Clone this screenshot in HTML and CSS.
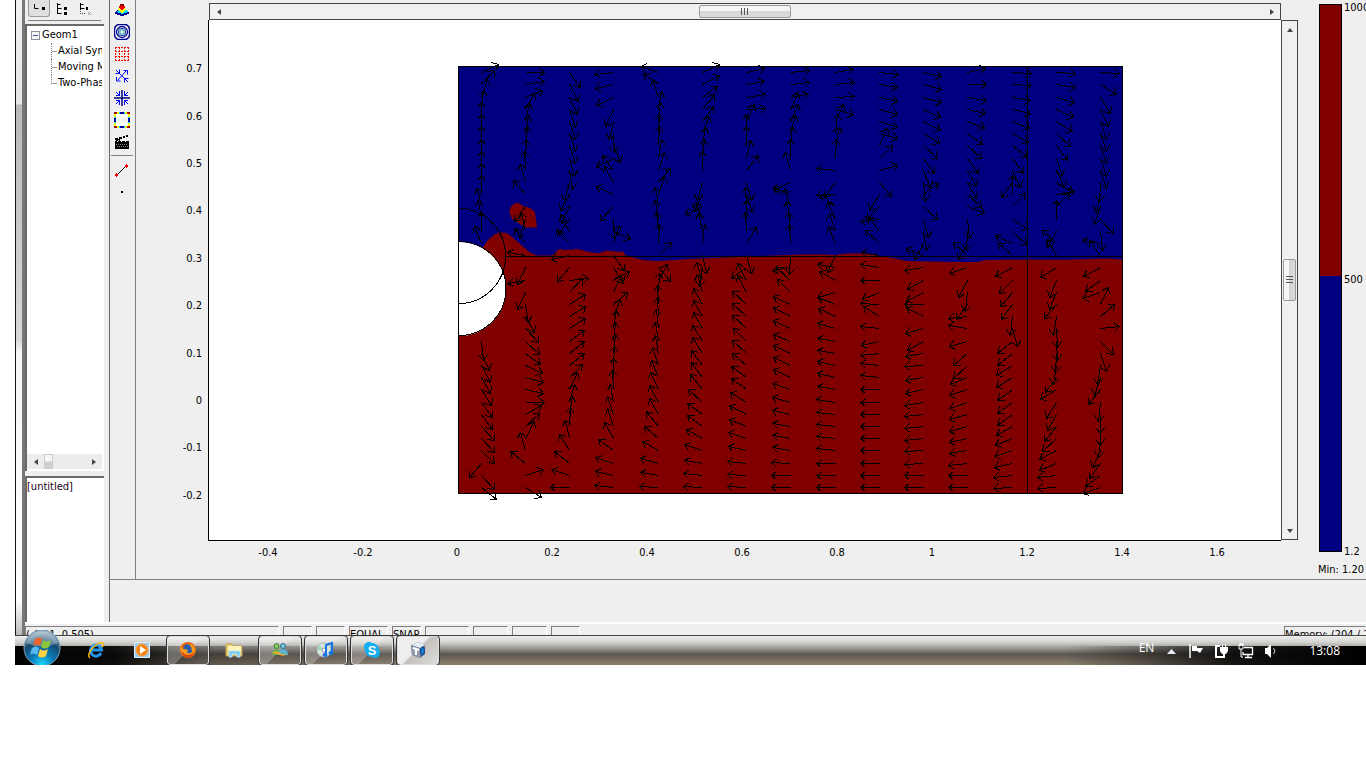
FILE: index.html
```html
<!DOCTYPE html>
<html lang="en">
<head>
  <meta charset="UTF-8" />
  <meta name="viewport" content="width=device-width, initial-scale=1.0" />
  <title>Geom1 - [untitled]</title>
  <link rel="stylesheet" href="styles.css">
</head>
<body>
  <div class="desktop">
    <div class="app">
      <div class="frame"></div>
      <div class="window">
        <div class="upper">
          <aside class="sidebar">
            <div class="view-buttons">
              <button class="view-btn pressed" aria-label="Compact"><svg width="14" height="14"><path d="M2.500 3v4.500h4" fill="none" stroke="#000"/><rect x="10" y="6" width="3" height="3"/></svg></button>
              <button class="view-btn" aria-label="Expanded"><svg width="14" height="14"><path d="M2.500 1v11M2.500 6.500h4M2.500 11.500h4M2.500 2.500h3" fill="none" stroke="#000"/><rect x="9" y="5" width="3" height="3"/><rect x="9" y="10" width="3" height="3"/></svg></button>
              <button class="view-btn" aria-label="Detailed"><svg width="14" height="14"><path d="M2.500 1v7M2.500 2.500h3M2.500 6.500h4" fill="none" stroke="#000"/><path d="M2.500 9v3M4 11.500h4" stroke="#555" stroke-dasharray="1 1"/><rect x="8" y="5" width="2" height="3"/><path d="M10 10l3 3M13 10l-3 3" stroke="#999"/></svg></button>
            </div>
            <div class="tree">
              <ul class="tree-list">
                <li class="root"><span class="expander"></span>Geom1</li>
                <li class="leaf">Axial Symmetry</li>
                <li class="leaf">Moving Mesh</li>
                <li class="leaf last">Two-Phase Flow</li>
              </ul>
              <div class="tree-scroll">
                <button class="arrow left" aria-label="Scroll left"></button>
                <span class="tree-thumb"></span>
                <button class="arrow right" aria-label="Scroll right"></button>
              </div>
            </div>
            <div class="details">[untitled]</div>
          </aside>

          <main class="main">
            <div class="work">
              <nav class="toolbar">
                <button class="tool" aria-label="Surface plot"><svg width="16" height="16" shape-rendering="crispEdges"><path d="M0 11l4-3h8l4 3-4 2-4 1-4-1z" fill="#000090"/><path d="M2 10l3-3h6l3 3-6 2z" fill="#00d8ff"/><path d="M4 8l2-3h4l2 3-4 3z" fill="#ff0"/><path d="M5 6V4h1V2h4v2h1v2l-3 2z" fill="#f40000"/><rect x="6" y="2" width="4" height="2" fill="#900000"/></svg></button>
                <button class="tool" aria-label="Contour plot"><svg width="16" height="16"><rect x=".5" y=".5" width="15" height="15" rx="5" fill="#fff" stroke="#000090" stroke-width="1.500"/><circle cx="8" cy="8" r="5.500" fill="none" stroke="#000090" stroke-width="1.300"/><rect x="4.500" y="4.500" width="7" height="7" rx="2" fill="#fff" stroke="#2030a0"/><rect x="6" y="6" width="4" height="4" fill="#fff" stroke="#189090"/></svg></button>
                <button class="tool" aria-label="Arrow plot"><svg width="16" height="16"><g fill="none" stroke="#f00" stroke-dasharray="2 1"><path d="M1 1.500h14M1 5.500h14M1 10.500h14M1 14.500h14M1.500 1v14M5.500 1v14M10.500 1v14M14.500 1v14"/></g><path d="M7 7h2v2H7z" fill="#efefef"/></svg></button>
                <button class="tool" aria-label="Principal plot"><svg width="16" height="16" fill="none" stroke="#00f"><path d="M4 4l8 8M12 3l-8 9M1.500 5.500h4v-4M2 2l3 3M9.500 2.500h4v4M2.500 9v4h4M10.500 14.500v-4h4M14 14l-3-3"/></svg></button>
                <button class="tool" aria-label="Streamline plot"><svg width="16" height="16" fill="none" stroke="#00f"><path d="M2 2l4 4M14 2l-4 4M2 14l4-4M14 14l-4-4M2 5.500h3.500V1M14 5.500h-3.500V1M2 10.500h3.500V15M14 10.500h-3.500V15"/><path d="M8 0v16M0 8h16" stroke="#000080" stroke-width="1.500"/></svg></button>
                <button class="tool" aria-label="Boundary plot"><svg width="16" height="16" shape-rendering="crispEdges"><path d="M1 1h14v14H1z" fill="#fff" stroke="#0000a0" stroke-width="2"/><g fill="#ff0"><path d="M2 0h3v2H2zM11 0h3v2h-3zM2 14h3v2H2zM11 14h3v2h-3zM0 2h2v3H0zM0 11h2v3H0zM14 2h2v3h-2zM14 11h2v3h-2z"/></g><g fill="#00d8ff"><path d="M5 0h1v2H5zM10 0h1v2h-1zM5 14h1v2H5zM10 14h1v2h-1zM0 5h2v1H0zM0 10h2v1H0zM14 5h2v1h-2zM14 10h2v1h-2z"/></g><g fill="#a00000"><path d="M0 0h3v2H0zM13 0h3v2h-3zM0 14h3v2H0zM13 14h3v2h-3z"/></g></svg></button>
                <button class="tool" aria-label="Animate"><svg width="16" height="16" shape-rendering="crispEdges"><path d="M1 7h14v8H1zM1 4h3v2H1zM5 3h3v2H5zM9 2h2v2H9zM12 1h2v2h-2zM2 5h4v2H2z"/><path d="M3 8l2-2M7 8l2-2M11 8l2-2" stroke="#efefef"/><path d="M2 10.500h12M3 12.500h12" stroke="#888" stroke-dasharray="1 1"/></svg></button>
                <hr class="tool-sep">
                <button class="tool" aria-label="Line"><svg width="16" height="16"><path d="M2.500 13.500l10-10" stroke="#000"/><path d="M1 12h3v2H1zM2 11h1v4H2zM11 3h3v2h-3zM12 2h1v4h-1z" fill="#e00"/></svg></button>
                <button class="tool" aria-label="Point"><svg width="16" height="16"><path d="M7 7h2v2H7z"/></svg></button>
              </nav>

              <section class="canvas">
                <div class="h-scroll">
                  <button class="arrow left" aria-label="Scroll left"></button>
                  <span class="thumb h-thumb"></span>
                  <button class="arrow right" aria-label="Scroll right"></button>
                </div>
                <svg class="plot" viewBox="136 20 1145 558" role="img" aria-label="Phase plot with velocity arrows">
                  <rect x="209" y="20" width="1072" height="520" fill="#fff"/>
                  <path d="M208.500 20v520.500H1281" class="line"/>
                  <rect x="459" y="67" width="663" height="426" fill="#000080"/>
                  <path fill="#800000" d="M459 493V290L483 247L488 240L495 234L500 232.500L507 233L518 242L530 252.500L537 255.500H552L559 249L565 250L578 249L587 251.500L598 253.500L607 250.500L620 252L623 251L625 255L635 258L643 260L657 261L690 259L713 258L760 256L800 254.500H825L835 255L847 253.500L863 253.500L880 256L893 258L907 261L955 262H977L985 260L1027 259.500L1063 259.700L1107 258.500L1122 259.500V493Z"/>
                  <path fill="#800000" d="M509 211L512 205L518 202.500L523 206L530 208L535 212L537 227.500H525L520 224L512 219Z"/>
                  <path d="M459 242a47 47 0 0 1 0 94z" fill="#fff"/>
                  <path d="M459 241.500a47 47 0 0 1 0 94M459 208.500a46.500 47.500 0 0 1 0 95" class="line"/>
                  <path d="M506 256.500H1122M1027.500 67V493M458.500 66.500H1122.500V493.500H458.500Z" class="line"/>
                  <g id="arrows" class="line"></g>
                  <g id="ticks" class="ticks"></g>
                </svg>
                <div class="v-scroll">
                  <button class="arrow up" aria-label="Scroll up"></button>
                  <span class="thumb v-thumb"></span>
                  <button class="arrow down" aria-label="Scroll down"></button>
                </div>
                <div class="legend">
                  <div class="scale">
                    <div class="color-bar"></div>
                    <div class="scale-labels"><span>1000</span><span>500</span><span>1.2</span></div>
                  </div>
                  <div class="min">Min: 1.20</div>
                </div>
              </section>
            </div>
            <div class="log"></div>
          </main>
        </div>
        <div class="status">
          <span class="cell coords">(-0.21, 0.505)</span>
          <span class="cell small"></span>
          <span class="cell small"></span>
          <span class="cell equal">EQUAL</span>
          <span class="cell small">SNAP</span>
          <span class="cell wide"></span>
          <span class="cell medium"></span>
          <span class="cell medium"></span>
          <span class="cell small"></span>
          <span class="cell memory">Memory: (204 / 215)</span>
        </div>
      </div>
    </div>

    <footer class="taskbar">
      <button class="start" aria-label="Start">
        <svg width="38" height="36" viewBox="0 0 38 36">
          <defs>
            <radialGradient id="orb" cx=".5" cy=".95" r=".9"><stop offset="0" stop-color="#18d8ff"/><stop offset=".35" stop-color="#0b7cb8"/><stop offset=".7" stop-color="#164a70"/><stop offset="1" stop-color="#9ab4c4"/></radialGradient>
          </defs>
          <circle cx="19" cy="18" r="18" fill="url(#orb)" stroke="#7fa3b8"/>
          <path d="M3 13a17 17 0 0 1 32 0q-16 7-32 0z" fill="#fff" opacity=".3"/>
          <path d="M12 9q4-3 7 0l-2 7q-4-3-7 0z" fill="#f0642a"/>
          <path d="M20 10q4 3 8 0l-2 7q-4 3-8 0z" fill="#8cc63c"/>
          <path d="M9 18q4-3 7 0l-2 7q-4-3-7 0z" fill="#5ab8f0"/>
          <path d="M17 19q4 3 8 0l-2 7q-4 3-8 0z" fill="#ffd042"/>
        </svg>
      </button>
      <button class="task" aria-label="Internet Explorer"><svg width="18" height="18"><path d="M14 12a5.500 5.500 0 1 1 .500-3H5" fill="none" stroke="#2496ee" stroke-width="3"/><path d="M3 17C-2 13 10 0 16 2c1 1 0 3-1 4" fill="none" stroke="#f4b818" stroke-width="1.500"/></svg></button>
      <button class="task" aria-label="Media Player"><svg width="18" height="18"><path d="M1.500 1.500h15v15h-15z" fill="#9ccdf0" stroke="#dceefa"/><circle cx="9" cy="9" r="6" fill="#f58410" stroke="#f9a040"/><path d="M7 5v8l6-4z" fill="#fff"/></svg></button>
      <button class="task open" aria-label="Firefox"><svg width="18" height="18"><circle cx="9" cy="9" r="8" fill="#e8680c"/><circle cx="9" cy="8" r="5" fill="#2a5cab"/><path d="M1 5q3 4 5 3l3 1-1 3q3 1 5-1Q13 5 9 3q6-1 7 6-1 7-7 7T1 9z" fill="#f79a1c"/><path d="M2 9q3 5 7 5t6-4q-1 7-6 7T2 9z" fill="#d8480c"/></svg></button>
      <button class="task" aria-label="Explorer"><svg width="18" height="18"><path d="M1 3h6l1 2h9v10H1z" fill="#e8cf70" stroke="#bfa14c"/><path d="M3 5h13v5H3z" fill="#fff5b8"/><path d="M4 16v-6h11v6h-3v-3H7v3z" fill="#7ccaf0" stroke="#b8e6fa"/></svg></button>
      <button class="task open" aria-label="Messenger"><svg width="18" height="18"><circle cx="5.500" cy="5" r="2.500" fill="#8cc868" stroke="#3f7f30"/><path d="M1 14q0-6 5-6t5 6z" fill="#6fae50"/><circle cx="12" cy="5" r="2.500" fill="#80c8e0" stroke="#286f90"/><path d="M7 14q0-6 5-6t5 6z" fill="#5cb0d0"/><path d="M1 12q4-3 8 0t8 1q-4 3-8 1t-8-2z" fill="#f7a823"/></svg></button>
      <button class="task open" aria-label="iTunes"><svg width="18" height="18"><circle cx="7" cy="9" r="7" fill="#d5e6de" stroke="#b8b8c8"/><path d="M7 9L2 4l-2 5z" fill="#9ad8b8"/><path d="M7 9l3 6-5 1z" fill="#e7b8e0"/><circle cx="7" cy="9" r="2" fill="#fff" stroke="#999"/><path d="M9 13V4l6-2v9" fill="none" stroke="#1574e0" stroke-width="2"/><ellipse cx="8" cy="14" rx="2.500" ry="2" fill="#1574e0"/><ellipse cx="14" cy="12" rx="2.500" ry="2" fill="#1574e0"/></svg></button>
      <button class="task open" aria-label="Skype"><svg width="18" height="18"><circle cx="6" cy="6" r="5" fill="#10aef0"/><circle cx="12" cy="12" r="5" fill="#10aef0"/><circle cx="9" cy="9" r="7" fill="#10aef0"/><text x="9" y="14" class="skype">S</text></svg></button>
      <button class="task open active" aria-label="Multiphysics"><svg width="18" height="18"><path d="M2 4l8-3 6 3v9l-5 4-8-3z" fill="#63708c"/><path d="M2 4l8-3 6 3-5 3z" fill="#e6ecf6"/><path d="M2 4l9 3v10l-8-3z" fill="#8e99b0"/><path d="M4 7l6 2M7 8v6" stroke="#fff" stroke-width="2"/><ellipse cx="13.500" cy="10" rx="2" ry="4" fill="#1580d8" stroke="#123c80"/></svg></button>
      <div class="tray">
        <span class="lang">EN</span>
        <svg class="tray-icon" width="16" height="16"><path d="M4 11h9L8.500 6z" fill="#e8ecf4"/></svg>
        <svg class="tray-icon" width="16" height="16"><path d="M2 1v14" stroke="#fff" stroke-width="1.500"/><path d="M4 3h5v2h6l-3 5-3-2H4z" fill="#fff"/></svg>
        <svg class="tray-icon" width="16" height="16"><path d="M7 3H3v11h8v-3" fill="none" stroke="#fff" stroke-width="2"/><path d="M7 4h8v4l-2 3h-4L7 8zM9 1h1v3H9zM12 1h1v3h-1z" fill="#fff"/><path d="M11 10v4" stroke="#fff"/></svg>
        <svg class="tray-icon" width="16" height="16"><path d="M6 4.500h8.500v7H5V9M10 12v2M7 14.500h7" fill="none" stroke="#fff" stroke-width="1.300"/><path d="M1 2h4v4H1zM2 0h1v2H2zM4 0h1v2H4zM3 6v8h2" fill="none" stroke="#fff"/></svg>
        <svg class="tray-icon" width="16" height="16"><path d="M2 5h2l4-4v14l-4-4H2z" fill="#fff"/><path d="M10.500 5q3 3 0 6" fill="none" stroke="#ccc"/></svg>
        <time class="clock">13:08</time>
      </div>
    </footer>
  </div>

  <script>
    // arrow directions in degrees, one column per r position, listed top to bottom
    // x marks grid points inside the ball
    const x = null;
    const field = [
      [25,48,72,85,90,90,90,90,90,90,90,103,98,90,113,x,x,x,x,x,x,x,-83,-65,-62,-60,-58,-55,-55,-48,-48,-46,229,-48,-38],
      [0,8,22,60,78,80,85,87,92,105,130,235,250,103,125,170,243,190,243,-80,-60,-48,-42,-35,-25,-15,-12,0,30,43,62,104,142,20,-33],
      [-55,-62,-63,-70,-72,-70,-70,-74,-82,256,240,243,235,118,135,193,230,5,48,32,32,32,36,38,38,44,66,75,80,88,103,123,142,160,180],
      [187,193,206,243,258,-88,-67,208,125,120,155,227,-88,-27,70,-55,-58,30,65,40,68,80,83,84,87,90,93,100,110,110,120,143,160,167,173],
      [162,143,110,80,83,86,86,82,72,50,72,98,98,96,87,45,-50,60,88,92,94,97,98,100,108,113,116,118,120,128,140,150,165,171,177],
      [24,28,37,52,55,68,80,84,90,254,245,205,113,103,83,-77,262,108,107,120,120,120,122,123,125,127,129,138,143,145,150,160,170,175,178],
      [13,10,8,3,63,90,90,77,52,-75,-70,93,90,92,57,-75,215,118,118,138,138,137,136,137,140,144,145,148,152,157,162,168,173,178,178],
      [7,5,10,63,66,76,85,90,104,205,157,108,102,96,94,-92,190,137,136,154,152,155,157,155,155,155,160,164,167,170,170,171,177,180,180],
      [10,5,3,-14,65,83,77,86,175,235,184,140,115,108,113,245,170,150,197,158,156,166,170,170,168,168,170,172,175,175,173,174,179,179,180],
      [-6,-10,-12,-14,-19,-16,64,45,17,-50,236,225,187,127,137,170,172,180,202,177,146,175,192,187,173,174,180,179,180,180,180,180,180,180,180],
      [-11,-16,-17,-24,-28,-33,-42,-53,-68,-83,35,-42,-75,-82,240,158,188,210,208,180,152,197,210,190,184,190,192,188,187,185,185,184,182,180,180],
      [11,0,-8,-11,-23,-35,-42,-55,-60,-60,-42,-23,-84,266,240,138,200,242,263,235,186,172,197,220,222,203,198,198,197,194,191,190,187,180,180],
      [-3,-4,-9,-12,-21,-30,-38,-53,-64,233,90,45,-32,-42,153,140,208,226,230,234,264,-73,218,218,212,214,217,217,215,209,202,198,193,186,182],
      [-4,-8,-15,-24,-31,-42,-55,-70,-65,-33,10,45,90,240,137,120,213,247,247,230,262,-86,-87,268,262,235,213,238,240,232,222,208,202,187,183],
      [-2,-32,-58,-66,-72,-72,-70,-72,-70,268,258,250,-48,-83,170,125,208,216,198,63,40,6,-44,-72,262,252,232,263,-89,-89,265,246,235,217,200]
    ];

    // step along an angle, snapped to the middle of a pixel so the strokes stay thin
    function step(px, py, deg, len) {
      const a = deg * Math.PI / 180;
      return [Math.floor(px + len * Math.cos(a)) + 0.5, Math.floor(py - len * Math.sin(a)) + 0.5];
    }

    let d = '';
    field.forEach((column, i) => {
      column.forEach((angle, j) => {
        if (angle === null) return;
        const start = step(481 + i * 44.25, 72.7 + j * 12.2, 0, 0);
        const tip = step(start[0], start[1], angle, 18.7);
        const a = step(tip[0], tip[1], angle + 141, 7);
        const b = step(tip[0], tip[1], angle - 141, 7);
        d += `M${start}L${tip}M${a}L${tip}L${b}`;
      });
    });
    document.getElementById('arrows').innerHTML = `<path d="${d}"/>`;

    let ticks = '';
    for (let i = -2; i <= 7; i++) {
      ticks += `<text x="202" y="${Math.round(404 - i * 47.4)}" text-anchor="end">${i / 10}</text>`;
    }
    for (let i = -2; i <= 8; i++) {
      ticks += `<text x="${Math.round(457.4 + i * 94.9)}" y="556" text-anchor="middle">${i / 5}</text>`;
    }
    document.getElementById('ticks').innerHTML = ticks;
  </script>
</body>
</html>
```
FILE: styles.css
```css
:root {
  --face: #efefef;
  --shadow: #808080;
  --dark: #696969;
}

* {
  box-sizing: border-box;
}

body {
  margin: 0;
  background: #fff;
  color: #000;
  font-family: 'DejaVu Sans Condensed', 'DejaVu Sans', sans-serif;
  font-size: 11px;
  line-height: 16px;
  overflow: hidden;
}

button {
  margin: 0;
  padding: 0;
  border: none;
  background: none;
}

svg {
  display: block;
}

.desktop {
  display: flex;
  flex-direction: column;
  height: calc(100vh - 103px);
  margin-left: 15px;
}

.app {
  display: flex;
  flex: 1;
  min-height: 0;
  overflow: hidden;
}

.frame {
  width: 10px;
  flex: none;
  border-left: 1px solid #111;
  border-right: 3px solid #777;
  background: linear-gradient(#f2f2f2 0, #e6e6e6 104px, #b9b9b9 105px, #d8d8d8 340px, #f6f6f6 352px, #fff 600px, #bbb);
}

.window {
  display: flex;
  flex-direction: column;
  flex: 1;
  min-width: 0;
  background: var(--face);
}

.upper {
  display: flex;
  flex: 1;
  min-height: 0;
}

/* left column */
.sidebar {
  display: flex;
  flex-direction: column;
  width: 84px;
  flex: none;
  padding-right: 5px;
}

.view-buttons {
  display: flex;
  gap: 1px;
  height: 21px;
  margin: 0 3px 3px;
  border-bottom: 1px solid var(--shadow);
}

.view-btn {
  display: flex;
  justify-content: center;
  align-items: center;
  width: 22px;
  height: 17px;
}

.view-btn.pressed {
  border: 1px solid #999;
  border-top: none;
  border-radius: 0 0 3px 3px;
  background: #e0e0e0;
}

.tree {
  display: flex;
  flex-direction: column;
  justify-content: space-between;
  flex: 1;
  min-height: 0;
  padding-top: 1px;
  padding-bottom: 2px;
  border-top: 2px solid var(--dark);
  border-left: 2px solid var(--dark);
  background: #fff;
  overflow: hidden;
}

.tree-list {
  margin: 0;
  padding: 0;
  list-style: none;
  width: 75px;
  overflow: hidden;
  white-space: nowrap;
}

.root {
  display: flex;
  align-items: center;
  gap: 2px;
  padding-left: 4px;
}

.expander {
  width: 9px;
  height: 9px;
  border: 1px solid #8b93a0;
  background: linear-gradient(#3c5aa0, #3c5aa0) center / 5px 1px no-repeat, #f4f4f4;
}

.leaf {
  position: relative;
  padding-left: 31px;
}

.leaf::before {
  content: '';
  position: absolute;
  left: 24px;
  top: 0;
  width: 5px;
  height: 16px;
  border-left: 1px dotted var(--shadow);
  background: linear-gradient(#999, #999) 0 8px / 5px 1px no-repeat;
}

.leaf.last::before {
  height: 9px;
}

.tree-scroll {
  display: flex;
  align-items: center;
  width: 75px;
  height: 15px;
  background: #ececec;
}

.tree-thumb {
  width: 9px;
  height: 15px;
  margin-right: auto;
  border: 1px solid #ccc;
  background: linear-gradient(#f6f6f6 45%, #cfcfcf 55%);
}

.details {
  height: 146px;
  margin-top: 5px;
  padding-top: 1px;
  border-top: 2px solid var(--dark);
  border-left: 2px solid var(--dark);
  background: #fff;
  color: #200020;
}

/* scroll bars */
.arrow {
  width: 17px;
  height: 17px;
  flex: none;
}

.arrow::before {
  content: '';
  display: block;
  width: 0;
  margin: auto;
  border: 3px solid transparent;
}

.arrow.left::before {
  border-width: 3px 4px 3px 0;
  border-right-color: #444;
}

.arrow.right::before {
  border-width: 3px 0 3px 4px;
  border-left-color: #444;
}

.arrow.up::before {
  border-width: 0 3px 4px;
  border-bottom-color: #444;
}

.arrow.down::before {
  border-width: 4px 3px 0;
  border-top-color: #444;
}

.h-scroll,
.v-scroll {
  display: flex;
  align-items: center;
  justify-content: space-between;
  border: 1px solid #444;
  background: #f0f0f0;
}

.h-scroll {
  grid-area: 1 / 2;
  margin-top: 3px;
}

.v-scroll {
  grid-area: 2 / 3;
  flex-direction: column;
  margin-bottom: 39px;
}

.thumb {
  border: 1px solid #999;
  border-radius: 2px;
}

.h-thumb {
  width: 92px;
  height: 13px;
  background:
    repeating-linear-gradient(90deg, #555 0 1px, transparent 1px 3px) center / 8px 7px no-repeat,
    linear-gradient(#f5f5f5 45%, #d6d6d6 50%, #ddd);
}

.v-thumb {
  width: 13px;
  height: 42px;
  background:
    repeating-linear-gradient(#555 0 1px, transparent 1px 3px) center / 7px 8px no-repeat,
    linear-gradient(90deg, #f5f5f5 45%, #d0d0d6 50%, #ddd);
}

/* plot area */
.main {
  display: flex;
  flex-direction: column;
  flex: 1;
  min-width: 0;
  border-left: 1px solid var(--dark);
}

.work {
  display: flex;
  flex: 1;
  min-height: 0;
}

.toolbar {
  width: 26px;
  flex: none;
  margin-top: -1px;
  border-right: 1px solid var(--shadow);
}

.tool {
  display: flex;
  align-items: center;
  justify-content: center;
  width: 24px;
  height: 22px;
}

.tool-sep {
  height: 1px;
  margin: 2px 2px 3px 1px;
  border: none;
  background: var(--shadow);
}

.canvas {
  display: grid;
  grid-template-columns: 73px 1fr 17px 68px;
  grid-template-rows: 20px 1fr;
  flex: 1;
  min-width: 0;
}

.plot {
  grid-area: 2 / 1 / 3 / 3;
  width: 100%;
  overflow: visible;
}

.line {
  fill: none;
  stroke: #000;
  shape-rendering: crispEdges;
}

.ticks {
  font-size: 11px;
}

.legend {
  grid-area: 1 / 4 / 3 / 5;
  padding: 4px 0 0 20px;
  overflow: hidden;
  white-space: nowrap;
}

.scale {
  display: flex;
  gap: 2px;
  height: 548px;
  padding-left: 1px;
}

.color-bar {
  width: 23px;
  flex: none;
  border: 1px solid #000;
  background: linear-gradient(#800000 271px, #000080 271px);
}

.scale-labels {
  display: flex;
  flex-direction: column;
  justify-content: space-between;
  margin: -4px 0 -8px;
}

.min {
  margin-top: 10px;
}

.log {
  height: 43px;
  border-top: 1px solid var(--shadow);
}

/* status bar */
.status {
  display: flex;
  gap: 4px;
  height: 13px;
  padding-top: 2px;
  border-top: 2px solid #fff;
  overflow: hidden;
}

.cell {
  height: 20px;
  flex: none;
  border: 1px solid var(--shadow);
  border-right-color: #fff;
  line-height: 15px;
  white-space: nowrap;
}

.coords {
  width: 254px;
}

.small {
  width: 29px;
}

.equal {
  width: 39px;
}

.wide {
  width: 44px;
}

.medium {
  width: 35px;
}

.memory {
  width: 82px;
  margin-left: auto;
}

/* taskbar */
.taskbar {
  display: flex;
  align-items: center;
  height: 30px;
  flex: none;
  border-top: 1px solid #444;
  background:
    linear-gradient(90deg, #000 0, rgba(0, 0, 0, 0.9) 100px, rgba(0, 0, 0, 0.3) 200px, transparent 440px, transparent 1050px, rgba(0, 0, 0, 0.3) 1120px, rgba(0, 0, 0, 0.85) 1220px, #000) 0 10px no-repeat,
    linear-gradient(#eee 0, #d4d4d2 6px, #96928c 13px, #5d5750 18px, #8e8270 29px);
}

.start {
  width: 58px;
  height: 36px;
  margin-top: -6px;
  padding-left: 8px;
  position: relative;
}

.task {
  display: flex;
  align-items: center;
  justify-content: center;
  width: 42px;
  height: 29px;
  margin: 0 2px;
  padding-bottom: 1px;
  border: 1px solid transparent;
  border-radius: 3px;
}

.task.open {
  border-color: #ddd;
  outline: 1px solid #333;
  background: linear-gradient(135deg, rgba(255, 255, 255, 0.3) 50%, rgba(255, 255, 255, 0.08) 51%);
}

.task.active {
  background: linear-gradient(135deg, #eee 45%, #c4c0ba 50%, #ddd);
}

.skype {
  fill: #fff;
  font: bold 13px 'Liberation Sans', sans-serif;
  text-anchor: middle;
}

.tray {
  display: flex;
  align-items: center;
  gap: 9px;
  margin-left: auto;
  padding-right: 26px;
  color: #fff;
  font-family: 'Open Sans', sans-serif;
  font-size: 12px;
}

.tray svg {
  flex: none;
}

.lang {
  padding-bottom: 6px;
}

.clock {
  margin-left: 21px;
}
```
